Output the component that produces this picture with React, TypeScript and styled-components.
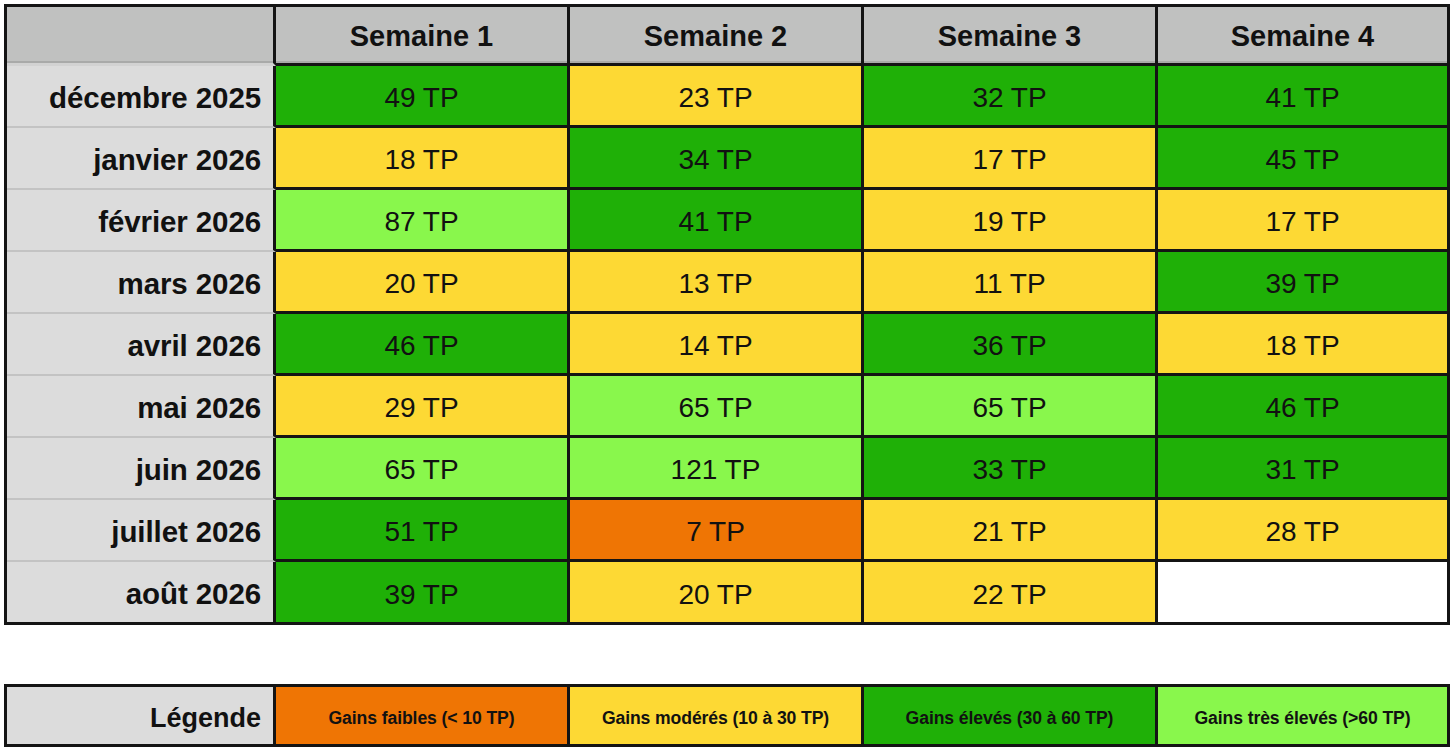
import { Fragment } from 'react'
import styled, { createGlobalStyle } from 'styled-components'

const GlobalStyle = createGlobalStyle`
	html, body {
		margin: 0;
		padding: 0;
		background: #ffffff;
	}
	body {
		font-family: 'Liberation Sans', Arial, sans-serif;
		color: #111111;
	}
`

type Tone = 'low' | 'mid' | 'high' | 'top' | 'empty'

const toneColors: Record<Tone, string> = {
	low: '#ef7504',
	mid: '#fdd934',
	high: '#1fb007',
	top: '#89f74c',
	empty: '#ffffff',
}

const BORDER = '#141414'
const COLUMNS = '269px repeat(3, 294px) 1fr'

const Page = styled.div`
	padding: 4px 6px 0 4px;
	display: flex;
	flex-direction: column;
	gap: 59px;
	width: 1446px;
`

const Grid = styled.div`
	display: grid;
	grid-template-columns: ${COLUMNS};
	border: 3px solid ${BORDER};
	width: 1446px;
	box-sizing: border-box;
`

const HeaderCell = styled.div<{ $label?: boolean; $last?: boolean }>`
	height: 59px;
	box-sizing: border-box;
	background: #c0c1c0;
	border-right: ${(p) => (p.$last ? 'none' : `3px solid ${BORDER}`)};
	border-bottom: ${(p) => (p.$label ? '3px solid #d2d2d2' : `3px solid ${BORDER}`)};
	box-shadow: inset 0 -2px 0 #a9aaa9;
	display: flex;
	align-items: center;
	justify-content: center;
	font-size: 29px;
	font-weight: bold;
	padding-top: 3px;
`

const RowLabel = styled.div<{ $last?: boolean }>`
	height: ${(p) => (p.$last ? '60px' : '62px')};
	box-sizing: border-box;
	background: #dcdcdc;
	border-right: 3px solid ${BORDER};
	border-bottom: ${(p) => (p.$last ? 'none' : '2px solid #c3c3c3')};
	display: flex;
	align-items: center;
	justify-content: flex-end;
	padding: 4px 12px 0 0;
	font-size: 29.5px;
	font-weight: bold;
	letter-spacing: -0.1px;
`

const ValueCell = styled.div<{ $tone: Tone; $lastRow?: boolean; $lastCol?: boolean }>`
	height: ${(p) => (p.$lastRow ? '60px' : '62px')};
	box-sizing: border-box;
	background: ${(p) => toneColors[p.$tone]};
	border-right: ${(p) => (p.$lastCol ? 'none' : `3px solid ${BORDER}`)};
	border-bottom: ${(p) => (p.$lastRow ? 'none' : `3px solid ${BORDER}`)};
	display: flex;
	align-items: center;
	justify-content: center;
	padding-top: 5px;
	font-size: 28px;
`

const LegendLabel = styled.div`
	height: 57px;
	box-sizing: border-box;
	background: #dcdcdc;
	border-right: 3px solid ${BORDER};
	display: flex;
	align-items: center;
	justify-content: flex-end;
	padding: 5px 12px 0 0;
	font-size: 27px;
	font-weight: bold;
`

const LegendItem = styled.div<{ $tone: Tone; $last?: boolean }>`
	height: 57px;
	box-sizing: border-box;
	background: ${(p) => toneColors[p.$tone]};
	border-right: ${(p) => (p.$last ? 'none' : `3px solid ${BORDER}`)};
	display: flex;
	align-items: center;
	justify-content: center;
	padding-top: 5px;
	font-size: 17.6px;
	font-weight: bold;
	letter-spacing: -0.1px;
`

const weeks = ['Semaine 1', 'Semaine 2', 'Semaine 3', 'Semaine 4']

const months: { name: string; values: (number | null)[] }[] = [
	{ name: 'décembre 2025', values: [49, 23, 32, 41] },
	{ name: 'janvier 2026', values: [18, 34, 17, 45] },
	{ name: 'février 2026', values: [87, 41, 19, 17] },
	{ name: 'mars 2026', values: [20, 13, 11, 39] },
	{ name: 'avril 2026', values: [46, 14, 36, 18] },
	{ name: 'mai 2026', values: [29, 65, 65, 46] },
	{ name: 'juin 2026', values: [65, 121, 33, 31] },
	{ name: 'juillet 2026', values: [51, 7, 21, 28] },
	{ name: 'août 2026', values: [39, 20, 22, null] },
]

const legend: { tone: Tone; text: string }[] = [
	{ tone: 'low', text: 'Gains faibles (< 10 TP)' },
	{ tone: 'mid', text: 'Gains modérés (10 à 30 TP)' },
	{ tone: 'high', text: 'Gains élevés (30 à 60 TP)' },
	{ tone: 'top', text: 'Gains très élevés (>60 TP)' },
]

const toneFor = (value: number | null): Tone => {
	if (value === null) return 'empty'
	if (value < 10) return 'low'
	if (value <= 30) return 'mid'
	if (value <= 60) return 'high'
	return 'top'
}

const App = () => {
	const lastIndex = months.length - 1

	return (
		<>
			<GlobalStyle />
			<Page>
				<Grid>
					<HeaderCell $label />
					{weeks.map((week, i) => (
						<HeaderCell key={week} $last={i === weeks.length - 1}>
							{week}
						</HeaderCell>
					))}
					{months.map((month, r) => (
						<Fragment key={month.name}>
							<RowLabel $last={r === lastIndex}>{month.name}</RowLabel>
							{month.values.map((value, c) => (
								<ValueCell
									key={`${month.name}-${c}`}
									$tone={toneFor(value)}
									$lastRow={r === lastIndex}
									$lastCol={c === month.values.length - 1}
								>
									{value === null ? '' : `${value} TP`}
								</ValueCell>
							))}
						</Fragment>
					))}
				</Grid>
				<Grid>
					<LegendLabel>Légende</LegendLabel>
					{legend.map((item, i) => (
						<LegendItem
							key={item.tone}
							$tone={item.tone}
							$last={i === legend.length - 1}
						>
							{item.text}
						</LegendItem>
					))}
				</Grid>
			</Page>
		</>
	)
}

export default App
